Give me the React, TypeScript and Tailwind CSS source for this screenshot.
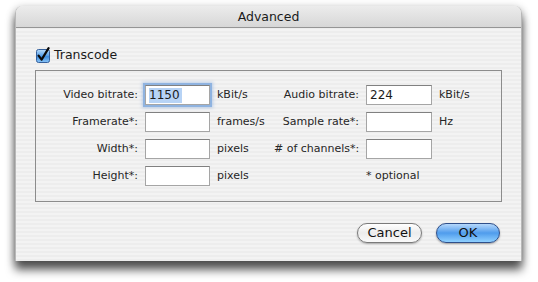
import React from "react";

const font = { fontFamily: '"DejaVu Sans", "Liberation Sans", sans-serif' };

function Field({ value, focused }: { value?: string; focused?: boolean }) {
  return (
    <div
      className={
        "h-[20px] w-full bg-white border border-[#a5a5a5] border-t-[#808080] flex items-center pl-[3px] text-[12px] text-[#1c1c1c] " +
        (focused ? "shadow-[0_0_0_2px_#8fb3e0,0_0_3px_3px_rgba(120,160,220,0.45)]" : "")
      }
    >
      {value ? (
        <span className={focused ? "bg-[#b7d3f5] pr-[2px] leading-[15px]" : "leading-[15px]"}>{value}</span>
      ) : null}
    </div>
  );
}

function Label({ children }: { children: React.ReactNode }) {
  return <div className="text-right text-[11px] text-[#262626] leading-[20px] whitespace-nowrap">{children}</div>;
}

function Unit({ children }: { children?: React.ReactNode }) {
  return <div className="text-[11px] text-[#262626] leading-[20px] whitespace-nowrap">{children}</div>;
}

export default function App() {
  return (
    <div className="w-[538px] h-[282px] bg-white overflow-hidden" style={font}>
      <div className="ml-[15px] mt-[6px] w-[507px] h-[255px] rounded-t-[7px] flex flex-col shadow-[0_9px_10px_rgba(0,0,0,0.62),0_2px_8px_rgba(0,0,0,0.3)] bg-[repeating-linear-gradient(0deg,#ededed_0px,#ededed_2px,#f3f3f3_2px,#f3f3f3_4px)] border-x border-[#b8b8b8]">
        <div className="h-[22px] rounded-t-[7px] bg-gradient-to-b from-[#ececec] to-[#d7d7d7] border-b border-[#959595] flex items-center justify-center pt-[1px] text-[12.5px] text-[#1a1a1a]">
          Advanced
        </div>
        <div className="px-[19px] pt-[18px] flex flex-col">
          <div className="flex items-center h-[16px] gap-[3px] mt-[1px]">
            <svg width="16" height="16" viewBox="0 0 16 16">
              <defs>
                <linearGradient id="cb" x1="0" y1="0" x2="0" y2="1">
                  <stop offset="0" stopColor="#b9dcfb" />
                  <stop offset="0.45" stopColor="#5fa6ec" />
                  <stop offset="0.55" stopColor="#3d8de0" />
                  <stop offset="1" stopColor="#8cc6f7" />
                </linearGradient>
              </defs>
              <rect x="1.5" y="2.5" width="13" height="13" rx="2" fill="url(#cb)" stroke="#35609c" />
              <path d="M3.6 8.6 L6.6 12.6 L13.6 1.2" fill="none" stroke="#0a0a0a" strokeWidth="2.2" strokeLinecap="round" strokeLinejoin="round" />
            </svg>
            <span className="text-[12.5px] text-[#1a1a1a] leading-[16px]">Transcode</span>
          </div>
          <div className="mt-[7px] h-[132px] border border-[#8c8c8c] pt-[14px]">
            <div className="grid grid-cols-[102px_65px_50px_85px_66px_60px] gap-x-[7px] gap-y-[7px] items-center">
              <Label>Video bitrate:</Label>
              <Field value="1150" focused />
              <Unit>kBit/s</Unit>
              <Label>Audio bitrate:</Label>
              <Field value="224" />
              <Unit>kBit/s</Unit>

              <Label>Framerate*:</Label>
              <Field />
              <Unit>frames/s</Unit>
              <Label>Sample rate*:</Label>
              <Field />
              <Unit>Hz</Unit>

              <Label>Width*:</Label>
              <Field />
              <Unit>pixels</Unit>
              <Label># of channels*:</Label>
              <Field />
              <Unit />

              <Label>Height*:</Label>
              <Field />
              <Unit>pixels</Unit>
              <div />
              <div className="col-span-2 text-[11px] text-[#262626] leading-[20px]">* optional</div>
            </div>
          </div>
          <div className="mt-[21px] flex justify-end gap-[14px] pr-[2px]">
            <button className="w-[65px] h-[20px] rounded-full border border-[#7a7a7a] bg-gradient-to-b from-[#ffffff] via-[#ececec] to-[#fafafa] text-[13px] text-[#111] leading-[18px] shadow-[0_1px_2px_rgba(0,0,0,0.3)]">
              Cancel
            </button>
            <button className="w-[64px] h-[20px] rounded-full border border-[#2f4f8a] bg-gradient-to-b from-[#b5d8fb] via-[#4f9cec] to-[#8fd0ff] text-[13px] text-[#111] leading-[18px] shadow-[0_1px_2px_rgba(0,0,0,0.35)]">
              OK
            </button>
          </div>
        </div>
      </div>
    </div>
  );
}
